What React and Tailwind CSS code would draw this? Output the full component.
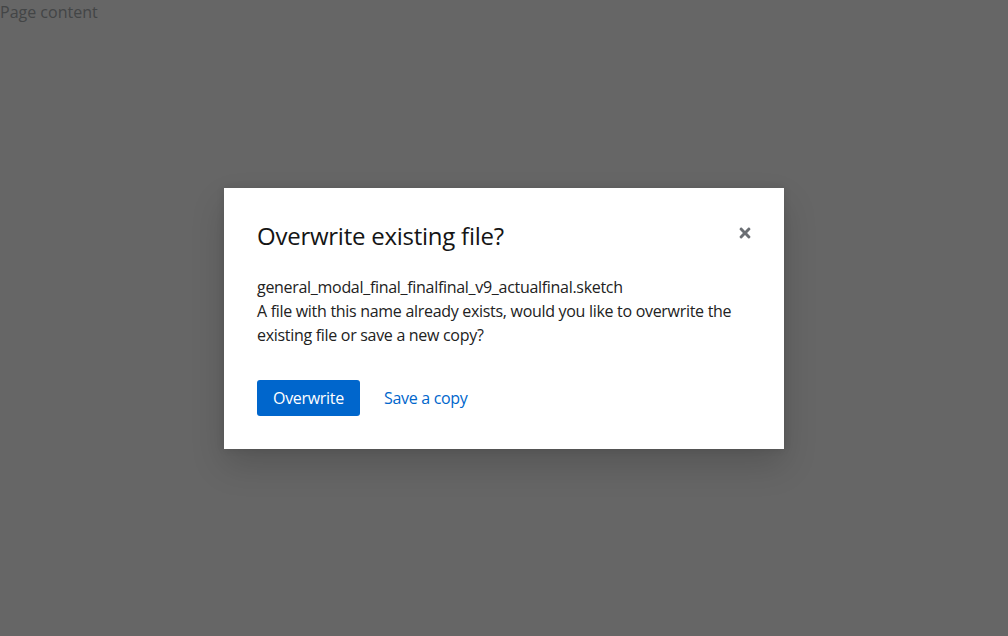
export default function App() {
  return (
    <div className="relative h-[636px] w-[1008px] overflow-hidden bg-white" style={{ fontFamily: '"Open Sans", "Liberation Sans", sans-serif' }}>
      <div className="text-[16px] leading-6 text-[#a6abad]">Page content</div>
      <div className="absolute inset-0 flex items-center justify-center bg-[rgba(3,3,3,0.607)]">
        <div className="relative w-[560px] bg-white px-[33px] pt-[32px] pb-[33px] shadow-[0_16px_32px_rgba(3,3,3,0.16),0_0_8px_rgba(3,3,3,0.1)]">
          <button className="absolute right-[27px] top-[33px] flex h-[24px] w-[24px] items-center justify-center text-[#6a6e73]">
            <svg viewBox="0 0 352 512" width="12" height="16" fill="currentColor">
              <path d="M242.72 256l100.07-100.07c12.28-12.28 12.28-32.19 0-44.48l-22.24-22.24c-12.28-12.28-32.19-12.28-44.48 0L176 189.28 75.93 89.21c-12.28-12.28-32.19-12.28-44.48 0L9.21 111.45c-12.28 12.28-12.28 32.19 0 44.48L109.28 256 9.21 356.07c-12.28 12.28-12.28 32.19 0 44.48l22.24 22.24c12.28 12.28 32.2 12.28 44.48 0L176 322.72l100.07 100.07c12.28 12.28 32.2 12.28 44.48 0l22.24-22.24c12.28-12.28 12.28-32.19 0-44.48L242.72 256z" />
            </svg>
          </button>
          <h1 className="text-[24px] leading-[31px] tracking-[-0.25px] text-[#151515]">Overwrite existing file?</h1>
          <div className="mt-[24px] text-[16px] leading-[24px] tracking-[-0.3px] text-[#222222]">
            general_modal_final_finalfinal_v9_actualfinal.sketch
            <br />
            A file with this name already exists, would you like to overwrite the existing file or save a new copy?
          </div>
          <div className="mt-[33px] flex items-center gap-[8px] tracking-[-0.3px]">
            <button className="h-[36px] rounded-[3px] bg-[#0066cc] px-[16px] text-[16px] font-medium text-white">Overwrite</button>
            <button className="h-[36px] px-[16px] text-[16px] text-[#0066cc]">Save a copy</button>
          </div>
        </div>
      </div>
    </div>
  );
}
